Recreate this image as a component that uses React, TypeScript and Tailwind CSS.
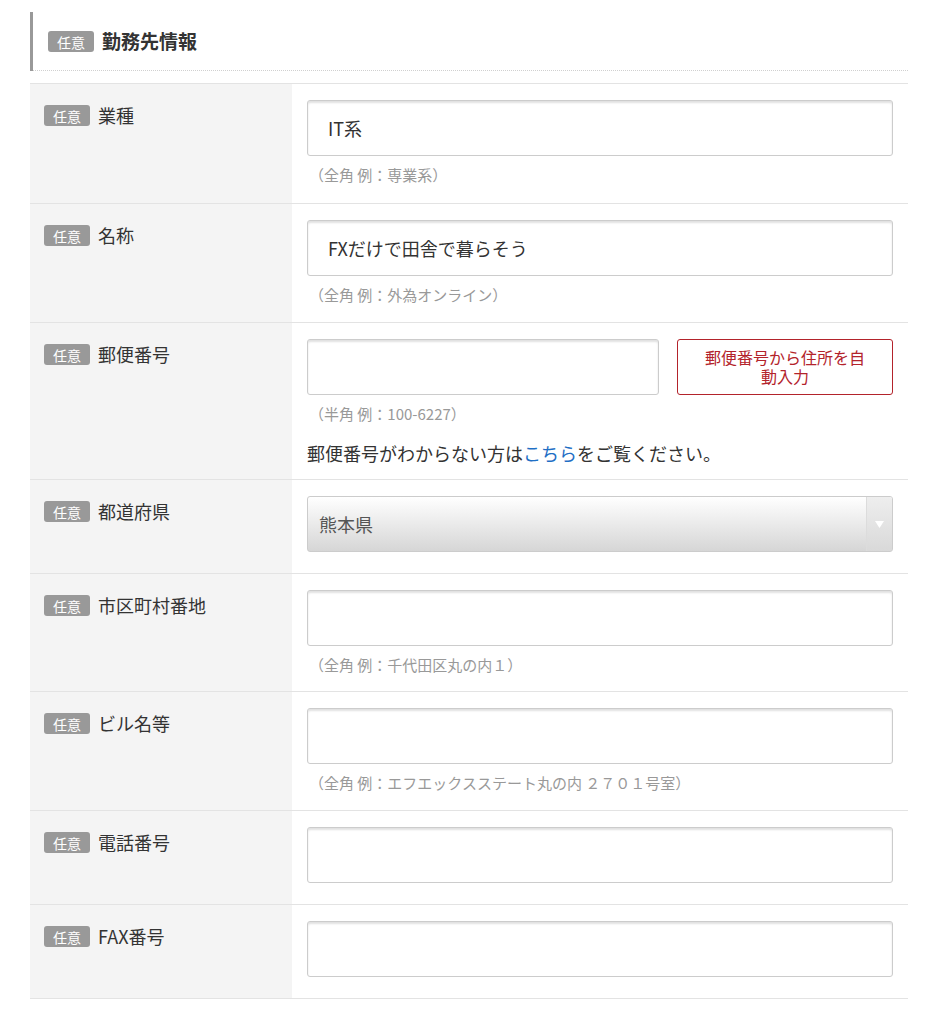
import React from "react";

const Badge = () => (
  <span className="inline-flex items-center justify-center h-[21px] px-[9px] rounded-[3px] bg-[#999999] text-white text-[14px] leading-none shrink-0">
    任意
  </span>
);

const TextInput = ({ value, className = "" }: { value?: string; className?: string }) => (
  <div
    className={`h-[56px] border border-[#cccccc] rounded-[3px] bg-white shadow-[inset_0_2px_2px_rgba(0,0,0,0.12)] flex items-center px-[20px] text-[18px] text-[#333333] ${className}`}
  >
    {value}
  </div>
);

const Hint = ({ children }: { children: React.ReactNode }) => (
  <p className="mt-[8px] pl-[2px] text-[15px] leading-[22px] text-[#999999]">{children}</p>
);

const Row = ({ label, children }: { label: string; children: React.ReactNode }) => (
  <div className="flex border-b border-[#e3e3e3]">
    <div className="w-[262px] shrink-0 bg-[#f4f4f4] pl-[14px] pt-[21px] flex items-start gap-[8px]">
      <Badge />
      <span className="text-[18px] leading-[21px] text-[#333333]">{label}</span>
    </div>
    <div className="flex-1 pl-[15px] pr-[15px] pt-[16px]">{children}</div>
  </div>
);

const App = () => {
  return (
    <div
      className="min-h-screen bg-white pt-[12px] pl-[30px] pr-[29px]"
      style={{ fontFamily: '"Noto Sans CJK JP", "Noto Sans", sans-serif' }}
    >
      {/* Section header */}
      <div className="border-l-[3px] border-[#999999]">
        <div className="h-[59px] flex items-center gap-[8px] pl-[15px] pt-[1px] border-b border-dotted border-[#d0d0d0]">
          <Badge />
          <h2 className="text-[19px] font-bold text-[#333333]">勤務先情報</h2>
        </div>
      </div>

      <div className="mt-[12px] border-t border-[#e3e3e3]">
        <Row label="業種">
          <TextInput value="IT系" />
          <div className="pb-[17px]">
            <Hint>（全角 例：専業系）</Hint>
          </div>
        </Row>

        <Row label="名称">
          <TextInput value="FXだけで田舎で暮らそう" />
          <div className="pb-[16px]">
            <Hint>（全角 例：外為オンライン）</Hint>
          </div>
        </Row>

        <Row label="郵便番号">
          <div className="flex gap-[18px]">
            <TextInput className="w-[352px]" />
            <button className="flex-1 h-[56px] border border-[#b3232b] rounded-[3px] bg-white text-[#b3232b] text-[16px] leading-[19px] px-[22px]">
              郵便番号から住所を自動入力
            </button>
          </div>
          <Hint>（半角 例：100-6227）</Hint>
          <p className="mt-[15px] pb-[13px] text-[18px] leading-[26px] text-[#333333]">
            郵便番号がわからない方は<span className="text-[#1f6fc5]">こちら</span>をご覧ください。
          </p>
        </Row>

        <Row label="都道府県">
          <div className="h-[56px] flex border border-[#cccccc] rounded-[3px] bg-gradient-to-b from-white to-[#d6d6d6] overflow-hidden mb-[21px]">
            <span className="flex-1 flex items-center pl-[11px] text-[18px] text-[#555555]">熊本県</span>
            <span className="w-[26px] flex items-center justify-center border-l border-[#dcdcdc] bg-gradient-to-b from-[#eeeeee] to-[#d9d9d9]">
              <svg width="9" height="7" viewBox="0 0 9 7">
                <path d="M0 0 L9 0 L4.5 7 Z" fill="#ffffff" />
              </svg>
            </span>
          </div>
        </Row>

        <Row label="市区町村番地">
          <TextInput />
          <div className="pb-[15px]">
            <Hint>（全角 例：千代田区丸の内１）</Hint>
          </div>
        </Row>

        <Row label="ビル名等">
          <TextInput />
          <div className="pb-[16px]">
            <Hint>（全角 例：エフエックスステート丸の内 ２７０１号室）</Hint>
          </div>
        </Row>

        <Row label="電話番号">
          <div className="pb-[21px]">
            <TextInput />
          </div>
        </Row>

        <Row label="FAX番号">
          <div className="pb-[21px]">
            <TextInput />
          </div>
        </Row>
      </div>
    </div>
  );
};

export default App;
